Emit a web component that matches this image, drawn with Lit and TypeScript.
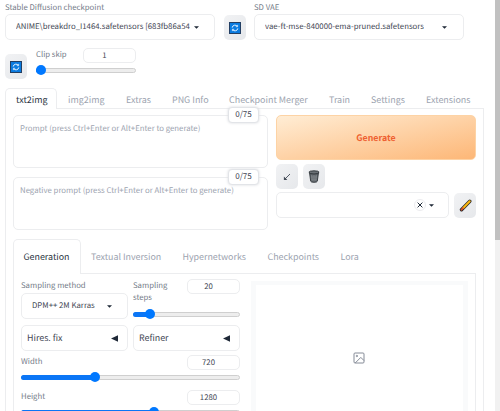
import { LitElement, html, css, svg } from "lit";
import { customElement, property } from "lit/decorators.js";

@customElement("sd-slider")
class SdSlider extends LitElement {
  @property({ type: Number }) value = 0;
  static styles = css`
    :host { display: block; height: 10px; position: relative; }
    .track { position: absolute; left: 0; right: 0; top: 2.5px; height: 5px; box-sizing: border-box; border: 1px solid #cfcfcf; border-radius: 3px; background: #ededed; }
    .fill { position: absolute; left: 0; top: 2.5px; height: 5px; border-radius: 3px; background: #0b76f6; }
    .thumb { position: absolute; top: 0; width: 10px; height: 10px; margin-left: -5px; border-radius: 50%; background: #0078ff; }
  `;
  render() {
    return html`<div class="track"></div>
      <div class="fill" style="width:${this.value}px"></div>
      <div class="thumb" style="left:${this.value}px"></div>`;
  }
}

const refresh = svg`<svg width="12" height="12" viewBox="0 0 12 12">
  <rect x="0.5" y="0.5" width="11" height="11" fill="#0a7be0" stroke="#233f63"/>
  <g fill="none" stroke="#e4f3ff" stroke-width="1">
    <path d="M3.2 5.6A2.8 2.8 0 0 1 8.3 4.4M8.8 6.4A2.8 2.8 0 0 1 3.7 7.6"/>
    <path d="M8.6 2.9V4.7H6.8M3.4 9.1V7.3H5.2" stroke-width="0.8"/>
  </g></svg>`;

const trash = svg`<svg width="12" height="13" viewBox="0 0 12 13">
  <path d="M1.6 3.2H10.4L9.3 11.2Q9.1 12.3 6 12.3T2.7 11.2Z" fill="#656b70" stroke="#2e3338" stroke-width="0.9"/>
  <path d="M3.6 5L4.3 11M6 5V11.4M8.4 5L7.7 11M3 7H9M3.2 9.2H8.8" stroke="#8c9296" stroke-width="0.5" fill="none"/>
  <ellipse cx="6" cy="2.4" rx="5.1" ry="1.6" fill="#6b7176" stroke="#272c31" stroke-width="0.9"/></svg>`;

const brush = svg`<svg width="13" height="13" viewBox="0 0 13 13">
  <path d="M2.5 10.8L10.8 2.2" stroke="#29292c" stroke-width="3.4" stroke-linecap="round"/>
  <path d="M4.2 9L10.7 2.3" stroke="#fbb80f" stroke-width="2" stroke-linecap="round"/>
  <path d="M2.5 10.7L4 9.2" stroke="#e0552a" stroke-width="1.8" stroke-linecap="round"/></svg>`;

const arrow = svg`<svg width="8" height="8" viewBox="0 0 8 8" fill="none" stroke="#444b57" stroke-width="0.9">
  <path d="M7 1L1.9 6.1"/><path d="M0.9 3.6V7.1H4.4Z" fill="#444b57" stroke="none"/></svg>`;

const picture = svg`<svg width="12" height="12" viewBox="0 0 12 12" fill="none" stroke="#868c98" stroke-width="1">
  <rect x="1" y="1" width="10" height="10" rx="1"/><circle cx="3.9" cy="4" r="0.7"/>
  <path d="M2.2 11L7.8 5.4L11 8.6"/></svg>`;

const caret = svg`<svg class="caret" width="5" height="3" viewBox="0 0 5 3"><path d="M0 0.2H5L2.5 2.8Z" fill="#1f2937"/></svg>`;
const tri = svg`<svg width="7" height="7" viewBox="0 0 7 7"><path d="M7 0.2V6.8L0 3.5Z" fill="#1f2937"/></svg>`;

@customElement("app-root")
class AppRoot extends LitElement {
  static styles = css`
    :host { display: flex; width: 500px; height: 411px; overflow: hidden; background: #fff; color: #3f4754;
      font-family: "Noto Sans CJK SC", "Open Sans", sans-serif; font-size: 8px; line-height: 12px; text-rendering: geometricPrecision; }
    * { box-sizing: border-box; }
    svg { display: block; flex: none; }
    .page { width: 479px; margin-left: 5px; flex: none; }
    .scroll { margin-left: auto; width: 5px; background: #f1f1f1; }
    .scroll-thumb { height: 240px; background: #c1c1c1; }
    .label { color: #747b88; font-size: 7.75px; line-height: 12px; padding-top: 1px; white-space: nowrap; }
    .box { border: 1px solid #ecedef; border-radius: 5px; background: #fff; }
    .select { display: flex; align-items: center; height: 26px; padding-left: 10px; white-space: nowrap; font-size: 7.8px; }
    .select .value { overflow: hidden; }
    .caret { margin-left: auto; }
    .tool { width: 22px; height: 25px; border-radius: 5px; background: linear-gradient(135deg, #f1f2f4, #e6e8eb); display: flex; align-items: center; justify-content: center; flex: none; }
    .num { width: 53px; height: 15px; border: 1px solid #ecedef; border-radius: 5px; text-align: center; line-height: 14px; font-size: 7.8px; padding-right: 10px; flex: none; }
    .models { display: flex; height: 48px; }
    .model { width: 210px; padding-top: 1px; }
    .model .label { height: 13px; }
    .models .tool { margin: 15px 8px 0 9px; }
    .ckpt { padding-right: 15px; }
    .ckpt .value { width: 174px; }
    .vae { padding-right: 16px; }
    .clip { display: flex; height: 40px; }
    .clip .tool { margin: 6px 9px 0 0; }
    .clip-body { width: 100px; }
    .head { display: flex; justify-content: space-between; }
    .clip .head { height: 17px; }
    .tabs { display: flex; border-bottom: 1px solid #ecedef; color: #9ca3af; white-space: nowrap; }
    .main-tabs { height: 21px; font-size: 8.95px; }
    .tab { flex: none; border: 1px solid transparent; border-bottom: 0; }
    .active { color: #2b3442; border-color: #ecedef; border-radius: 5px 5px 0 0; background: #fff; }
    .main-tabs .tab { height: 21px; padding-left: 10px; line-height: 22px; }
    .t1 { width: 52px; } .t2 { width: 58px; } .t3 { width: 46px; } .t4 { width: 57px; }
    .t5 { width: 100px; } .t6 { width: 42px; } .t7 { width: 55px; } .t8 { width: 65px; }
    .panel { border: solid #ecedef; border-width: 0 1px; padding: 6px 7px 0; height: 303px; }
    .top { display: flex; justify-content: space-between; height: 124px; width: 463px; }
    .prompts { width: 255px; }
    .prompt { position: relative; height: 53px; margin-bottom: 9px; padding: 7px 6px 0; color: #9ca3af; font-size: 7.8px; white-space: nowrap; }
    .count { position: absolute; right: 8px; top: -9px; width: 31px; height: 16px; border: 1px solid #e2e4e8; border-radius: 4px; background: #fff; box-shadow: 0 0 3px #d7d9de; color: #3f4754; text-align: center; line-height: 14px; font-size: 8.1px; }
    .actions { width: 200px; }
    .generate { height: 45px; border-radius: 5px; background: linear-gradient(to bottom right, #ffedd5, #fdb777); border: 1px solid #fdd3a5; color: #ee6030; font-weight: 700; font-size: 8.8px; line-height: 43px; text-align: center; }
    .tools { display: flex; gap: 5px; margin-top: 4px; }
    .styles { display: flex; gap: 5px; margin-top: 3px; align-items: flex-end; }
    .style-select { width: 173px; padding-right: 14px; justify-content: flex-end; gap: 3px; }
    .style-select .caret { margin: 0; }
    .clear { width: 12px; height: 12px; border: 1px solid #ececef; border-radius: 50%; display: flex; align-items: center; justify-content: center; }
    .sub-tabs { width: 463px; height: 35px; font-size: 8.9px; }
    .sub-tabs .tab { height: 35px; line-height: 34px; padding-left: 9.5px; }
    .s1 { width: 67.5px; } .s2 { width: 91.5px; } .s3 { width: 85px; } .s4 { width: 73px; } .s5 { width: 50px; }
    .sub { display: flex; width: 463px; height: 138px; border: solid #ecedef; border-width: 0 1px; padding-left: 7px; overflow: hidden; }
    .settings { width: 219px; padding-top: 5px; }
    .pair { display: grid; grid-template-columns: 107px 107px; column-gap: 5px; }
    .pair.first { height: 46px; }
    .first .head { height: 30px; }
    .first .select { padding-right: 15px; margin-top: 1px; }
    .fold { height: 26px; display: flex; align-items: center; justify-content: space-between; padding: 0 9px 0 5px; font-size: 8.9px; }
    .dim { height: 35px; }
    .dim .head { height: 17px; }
    .dims { padding-top: 4px; }
    .gallery { width: 217px; margin: 7px 0 0 11px; border: solid #f9fafb; border-width: 4px 5px 0; display: flex; justify-content: center; padding-top: 67px; padding-right: 1px; }
  `;

  private slider(label: string, value: string, at: number) {
    return html`<div class="dim">
      <div class="head"><span class="label">${label}</span><div class="num">${value}</div></div>
      <sd-slider .value=${at}></sd-slider>
    </div>`;
  }

  render() {
    const tabs = ["txt2img", "img2img", "Extras", "PNG Info", "Checkpoint Merger", "Train", "Settings", "Extensions"];
    const subTabs = ["Generation", "Textual Inversion", "Hypernetworks", "Checkpoints", "Lora"];
    return html`
      <div class="page">
        <div class="models">
          <div class="model">
            <div class="label">Stable Diffusion checkpoint</div>
            <div class="box select ckpt"><span class="value">ANIME\\breakdro_I1464.safetensors [683fb86a54</span>${caret}</div>
          </div>
          <div class="tool">${refresh}</div>
          <div class="model">
            <div class="label">SD VAE</div>
            <div class="box select vae"><span class="value">vae-ft-mse-840000-ema-pruned.safetensors</span>${caret}</div>
          </div>
        </div>
        <div class="clip">
          <div class="tool">${refresh}</div>
          <div class="clip-body">
            <div class="head"><span class="label">Clip skip</span><div class="num">1</div></div>
            <sd-slider .value=${5}></sd-slider>
          </div>
        </div>
        <div class="tabs main-tabs">
          ${tabs.map((t, i) => html`<div class="tab t${i + 1} ${i === 0 ? "active" : ""}">${t}</div>`)}
        </div>
        <div class="panel">
          <div class="top">
            <div class="prompts">
              <div class="box prompt">Prompt (press Ctrl+Enter or Alt+Enter to generate)<div class="count">0/75</div></div>
              <div class="box prompt">Negative prompt (press Ctrl+Enter or Alt+Enter to generate)<div class="count">0/75</div></div>
            </div>
            <div class="actions">
              <div class="generate">Generate</div>
              <div class="tools"><div class="tool">${arrow}</div><div class="tool">${trash}</div></div>
              <div class="styles">
                <div class="box select style-select">
                  <div class="clear"><svg width="6" height="6" viewBox="0 0 6 6"><path d="M0.6 0.6L5.4 5.4M5.4 0.6L0.6 5.4" stroke="#1f2937" stroke-width="1"/></svg></div>
                  ${caret}
                </div>
                <div class="tool">${brush}</div>
              </div>
            </div>
          </div>
          <div class="tabs sub-tabs">
            ${subTabs.map((t, i) => html`<div class="tab s${i + 1} ${i === 0 ? "active" : ""}">${t}</div>`)}
          </div>
          <div class="sub">
            <div class="settings">
              <div class="pair first">
                <div>
                  <div class="label">Sampling method</div>
                  <div class="box select"><span class="value">DPM++ 2M Karras</span>${caret}</div>
                </div>
                <div>
                  <div class="head"><span class="label">Sampling<br />steps</span><div class="num">20</div></div>
                  <sd-slider .value=${17}></sd-slider>
                </div>
              </div>
              <div class="pair">
                <div class="box fold">Hires. fix ${tri}</div>
                <div class="box fold">Refiner ${tri}</div>
              </div>
              <div class="dims">
                ${this.slider("Width", "720", 74)}
                ${this.slider("Height", "1280", 133)}
              </div>
            </div>
            <div class="gallery">${picture}</div>
          </div>
        </div>
      </div>
      <div class="scroll"><div class="scroll-thumb"></div></div>
    `;
  }
}
